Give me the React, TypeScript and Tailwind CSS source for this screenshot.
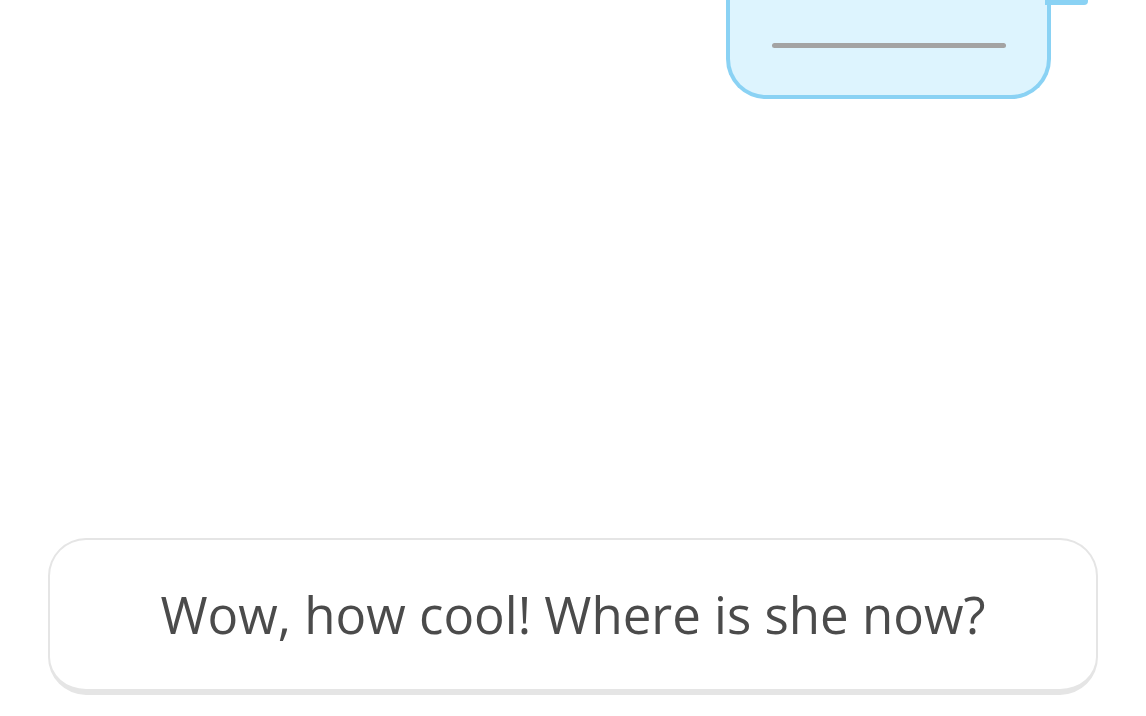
export default function App() {
    return (
        <div className="flex flex-col h-[716px] w-[1146px] bg-white overflow-hidden" style={{ fontFamily: '"Open Sans", "Noto Sans", sans-serif' }}>
            {/* Speech bubble, top cut off */}
            <div className="relative ml-[726px] w-[325px] h-[99px] rounded-b-[40px] border-x-4 border-b-4 border-[#8ad2f4] bg-[#ddf4fe] flex items-end justify-center pb-[47px]">
                <div className="w-[234px] h-[5px] rounded-full bg-[#a3a3a3]" />
                <div className="absolute top-0 -right-[41px] w-[43px] h-[5px] rounded-br-[4px] bg-[#8ad2f4]" />
            </div>

            {/* Answer option */}
            <div className="mt-[439px] mx-[48px] h-[157px] rounded-[38px] border-2 border-b-[6px] border-[#e5e5e5] bg-white flex items-center justify-center">
                <span className="text-[51px] text-[#4b4b4b] leading-none">Wow, how cool! Where is she now?</span>
            </div>
        </div>
    );
}
